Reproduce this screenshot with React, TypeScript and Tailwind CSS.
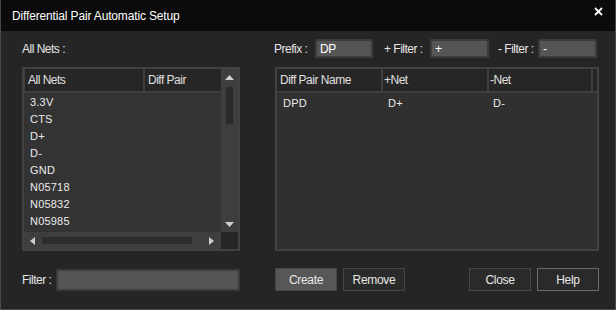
import React from 'react';

const font = { fontFamily: '"Liberation Sans", Arial, sans-serif' };

function Field({ w, h = 'h-[19px]', value }: { w: string; h?: string; value?: string }) {
  return (
    <div className={`${w} ${h} border-2 border-[#3b3b3b] bg-[#555555] flex items-center pl-[3px] text-[12px] text-white`}>
      {value}
    </div>
  );
}

function Button({ label, className }: { label: string; className: string }) {
  return (
    <div className={`h-[23px] w-[62px] flex items-center justify-center border text-[12px] tracking-[-0.3px] text-[#e8e8e8] ${className}`}>
      {label}
    </div>
  );
}

const nets = ['3.3V', 'CTS', 'D+', 'D-', 'GND', 'N05718', 'N05832', 'N05985'];

export default function App() {
  return (
    <div style={font} className="w-[616px] h-[310px] bg-[#252525] border border-t-0 border-[#4a4a4a] flex flex-col select-none">
      <div className="h-[31px] bg-[#0b0b0b] flex items-center justify-between pl-[11px] pr-[12px]">
        <span className="text-[12px] tracking-[-0.15px] text-white">Differential Pair Automatic Setup</span>
        <svg width="9" height="9" viewBox="0 0 9 9" className="-mt-[8px]">
          <path d="M1 1L8 8M8 1L1 8" stroke="#ffffff" strokeWidth="1.8" />
        </svg>
      </div>

      <div className="grid grid-cols-[218px_324px] gap-x-[35px] px-[21px] pt-[8px]">
        <div className="h-[19px] flex items-center text-[12px] tracking-[-0.5px] text-[#e6e6e6]">All Nets :</div>
        <div className="h-[19px] flex items-center whitespace-nowrap text-[12px] tracking-[-0.5px] text-[#e6e6e6]">
          <span className="w-[41px] -ml-px">Prefix :</span>
          <Field w="w-[58px]" value="DP" />
          <span className="w-[46px] ml-[11px]">+ Filter :</span>
          <Field w="w-[59px]" value="+" />
          <span className="w-[40px] ml-[9px]">- Filter :</span>
          <Field w="w-[59px]" value="-" />
        </div>

        {/* All nets list */}
        <div className="mt-[9px] h-[184px] border-2 border-[#424242] flex flex-col">
          <div className="flex flex-1 min-h-0">
            <div className="flex-1 flex flex-col">
              <div className="h-[24px] flex text-[12px] tracking-[-0.5px] text-[#e0e0e0]">
                <div className="w-[121px] pl-[3px] flex items-center bg-[#262626] border-l border-r-2 border-b-2 border-[#3e3e3e]">All Nets</div>
                <div className="flex-1 pl-[3px] flex items-center bg-[#262626] border-b-2 border-[#3e3e3e]">Diff Pair</div>
              </div>
              <div className="flex-1 bg-[#333333] pt-[1px] pl-[6px] text-[11px] tracking-[0.2px] text-[#ececec]">
                {nets.map((n) => (
                  <div key={n} className="h-[17px] flex items-center">{n}</div>
                ))}
              </div>
            </div>
            <div className="w-[17px] bg-[#3e3e3e] flex flex-col items-center">
              <svg width="9" height="5" viewBox="0 0 9 5" className="mt-[6px]">
                <path d="M4.5 0L9 5H0Z" fill="#cfcfcf" />
              </svg>
              <div className="w-[7px] h-[37px] bg-[#2a2a2a] mt-[7px]" />
              <div className="flex-1" />
              <svg width="9" height="5" viewBox="0 0 9 5" className="mb-[5px]">
                <path d="M0 0H9L4.5 5Z" fill="#cfcfcf" />
              </svg>
            </div>
          </div>
          <div className="h-[17px] flex">
            <div className="flex-1 bg-[#3e3e3e] flex items-center pl-[6px] pr-[7px]">
              <svg width="5" height="8" viewBox="0 0 5 8">
                <path d="M5 0V8L0 4Z" fill="#cfcfcf" />
              </svg>
              <div className="flex-1 h-[7px] bg-[#2c2c2c] ml-[7px] mr-[17px]" />
              <svg width="5" height="8" viewBox="0 0 5 8">
                <path d="M0 0L5 4L0 8Z" fill="#cfcfcf" />
              </svg>
            </div>
            <div className="w-[17px] bg-[#262626]" />
          </div>
        </div>

        {/* Diff pair table */}
        <div className="mt-[9px] h-[184px] border-2 border-[#424242] flex flex-col bg-[#303030]">
          <div className="h-[24px] flex text-[12px] tracking-[-0.5px] text-[#e0e0e0] bg-[#262626]">
            <div className="w-[106px] pl-[3px] flex items-center border-r-2 border-b-2 border-[#3e3e3e]">Diff Pair Name</div>
            <div className="w-[106px] pl-[1px] flex items-center border-r-2 border-b-2 border-[#3e3e3e]">+Net</div>
            <div className="w-[104px] pl-[1px] flex items-center border-r-2 border-b-2 border-[#3e3e3e]">-Net</div>
            <div className="flex-1 border-b-2 border-[#3e3e3e]" />
          </div>
          <div className="h-[18px] flex items-center text-[11px] tracking-[0.2px] text-[#ececec] mt-px">
            <span className="w-[105px] pl-[6px]">DPD</span>
            <span className="w-[105px] pl-[6px]">D+</span>
            <span className="pl-[6px]">D-</span>
          </div>
        </div>

        <div className="mt-[17px] flex items-center">
          <span className="w-[34px] text-[12px] tracking-[-0.5px] text-[#e6e6e6]">Filter :</span>
          <Field w="flex-1" h="h-[22px]" />
        </div>
        <div className="mt-[17px] flex items-center">
          <Button label="Create" className="bg-[#575757] border-[#464646]" />
          <Button label="Remove" className="bg-[#2a2a2a] border-[#474747] ml-[6px]" />
          <div className="flex-1" />
          <Button label="Close" className="bg-[#2a2a2a] border-[#474747]" />
          <Button label="Help" className="bg-[#2a2a2a] border-[#6a6a6a] ml-[6px]" />
        </div>
      </div>
    </div>
  );
}
